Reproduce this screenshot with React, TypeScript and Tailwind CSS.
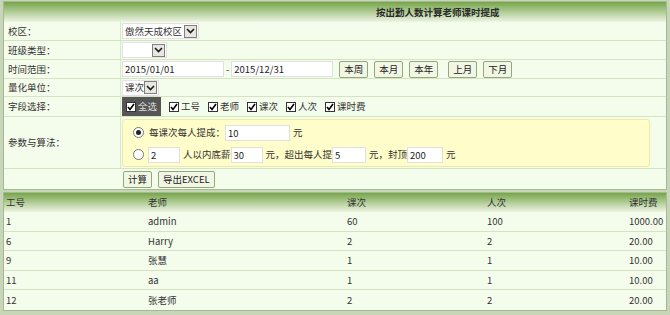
import React from "react";

const Chevron = () => (
  <svg width="9" height="6" viewBox="0 0 9 6">
    <path d="M1 1 L4.5 4.5 L8 1" fill="none" stroke="#1a1a1a" strokeWidth="1.6" />
  </svg>
);

const Select = ({ text, w }: { text: string; w: string }) => (
  <div className={`flex items-center justify-between h-[16px] bg-white border border-[#e2e2e2] whitespace-nowrap ${w}`}>
    <span className="pl-[2px] text-[#333]">{text}</span>
    <span className="shrink-0 w-[13px] h-[13px] mr-[1px] flex items-center justify-center bg-[#e8e6e0] border border-[#7f7f7f]">
      <Chevron />
    </span>
  </div>
);

const Box = () => (
  <span className="inline-flex w-[10px] h-[10px] bg-white border border-[#333] items-center justify-center mr-[2px]">
    <svg width="8" height="8" viewBox="0 0 8 8">
      <path d="M1 4 L3 6.5 L7 1" fill="none" stroke="#000" strokeWidth="1.6" />
    </svg>
  </span>
);

const Radio = ({ on }: { on?: boolean }) => (
  <span className="inline-flex w-[11px] h-[11px] rounded-full border border-[#777] bg-white items-center justify-center mr-[3px]">
    {on && <span className="w-[5px] h-[5px] rounded-full bg-[#222]" />}
  </span>
);

const Btn = ({ children, cls = "" }: { children: React.ReactNode; cls?: string }) => (
  <button className={`h-[17px] px-[4px] leading-[15px] bg-[#f1f7e4] border border-[#93a97a] rounded-[2px] text-[#222] whitespace-nowrap ${cls}`}>
    {children}
  </button>
);

const Input = ({ v, w }: { v: string; w: string }) => (
  <span className={`inline-block h-[16px] leading-[15px] bg-white border border-[#e0e0e0] pl-[2px] text-[#222] ${w}`}>{v}</span>
);

const Row = ({ label, h, children }: { label: string; h: string; children?: React.ReactNode }) => (
  <div className={`flex border-b border-[#d5e3c3] ${h}`}>
    <div className="w-[117px] pl-[4px] flex items-center border-r border-[#dbe7cd] text-[#333]">{label}</div>
    <div className="flex-1 flex items-center pl-[1px] whitespace-nowrap">{children}</div>
  </div>
);

const rows = [
  ["1", "admin", "60", "100", "1000.00"],
  ["6", "Harry", "2", "2", "20.00"],
  ["9", "张慧", "1", "1", "10.00"],
  ["11", "aa", "1", "1", "10.00"],
  ["12", "张老师", "2", "2", "20.00"],
];

const Cells = ({ c }: { c: string[] }) => (
  <>
    <div className="w-[142px] pl-[2px]">{c[0]}</div>
    <div className="w-[199px] pl-[2px]">{c[1]}</div>
    <div className="w-[140px] pl-[2px]">{c[2]}</div>
    <div className="w-[142px] pl-[2px]">{c[3]}</div>
    <div className="flex-1 pl-[2px] whitespace-nowrap">{c[4]}</div>
  </>
);

export default function App() {
  return (
    <div className="min-h-screen bg-[#c7d5b8] px-[3px] pt-[1px] text-[9.5px] font-['Noto_Sans_CJK_SC','Liberation_Sans',sans-serif] text-[#333]">
      <div className="border border-[#a6b990] bg-[#f4fceb]">
        <div className="h-[20px] bg-linear-to-b from-[#77a548] to-[#eef4e3] flex items-center pl-[372px] font-bold text-[#2a2a2a]">
          按出勤人数计算老师课时提成
        </div>
        <Row label="校区：" h="h-[19px]">
          <Select text="傲然天成校区" w="w-[77px]" />
        </Row>
        <Row label="班级类型：" h="h-[19px]">
          <Select text="" w="w-[45px]" />
        </Row>
        <Row label="时间范围：" h="h-[19px]">
          <Input v="2015/01/01" w="w-[102px]" />
          <span className="mx-[2px]">-</span>
          <Input v="2015/12/31" w="w-[102px]" />
          <div className="flex gap-[6px] ml-[6px]">
            <Btn>本周</Btn>
            <Btn>本月</Btn>
            <Btn>本年</Btn>
            <Btn cls="ml-[4px]">上月</Btn>
            <Btn>下月</Btn>
          </div>
        </Row>
        <Row label="量化单位：" h="h-[18px]">
          <Select text="课次" w="w-[37px]" />
        </Row>
        <Row label="字段选择：" h="h-[20px]">
          <div className="flex items-center gap-[8px] h-full">
            <span className="flex items-center h-full bg-[#555] px-[4px] text-[#ddd]">
              <Box />全选
            </span>
            <span className="flex items-center"><Box />工号</span>
            <span className="flex items-center"><Box />老师</span>
            <span className="flex items-center"><Box />课次</span>
            <span className="flex items-center"><Box />人次</span>
            <span className="flex items-center"><Box />课时费</span>
          </div>
        </Row>
        <Row label="参数与算法：" h="h-[52px]">
          <div className="w-[528px] h-[48px] bg-[#fffdc9] border border-[#ebeba3] rounded-[3px] flex flex-col justify-center gap-[6px] pt-[2px] pl-[10px]">
            <div className="flex items-center">
              <Radio on />
              <span className="ml-[2px]">每课次每人提成：</span>
              <Input v="10" w="w-[65px]" />
              <span className="ml-[3px]">元</span>
            </div>
            <div className="flex items-center">
              <Radio />
              <Input v="2" w="w-[32px] ml-[1px]" />
              <span className="ml-[3px]">人以内底薪</span>
              <Input v="30" w="w-[32px]" />
              <span className="ml-[3px]">元，超出每人提</span>
              <Input v="5" w="w-[34px]" />
              <span className="ml-[3px]">元，封顶</span>
              <Input v="200" w="w-[36px]" />
              <span className="ml-[3px]">元</span>
            </div>
          </div>
        </Row>
        <div className="flex h-[20px] items-center pl-[119px] gap-[6px]">
          <Btn>计算</Btn>
          <Btn>导出EXCEL</Btn>
        </div>
      </div>

      <div className="mt-[2px] border border-[#a6b990] bg-[#f4fceb]">
        <div className="flex items-center h-[19px] bg-linear-to-b from-[#77a548] to-[#eef4e3]">
          <Cells c={["工号", "老师", "课次", "人次", "课时费"]} />
        </div>
        {rows.map((r, i) => (
          <div
            key={i}
            className={`flex items-center h-[19.5px] ${i < rows.length - 1 ? "border-b border-[#d5e3c3]" : ""}`}
          >
            <Cells c={r} />
          </div>
        ))}
      </div>
    </div>
  );
}
